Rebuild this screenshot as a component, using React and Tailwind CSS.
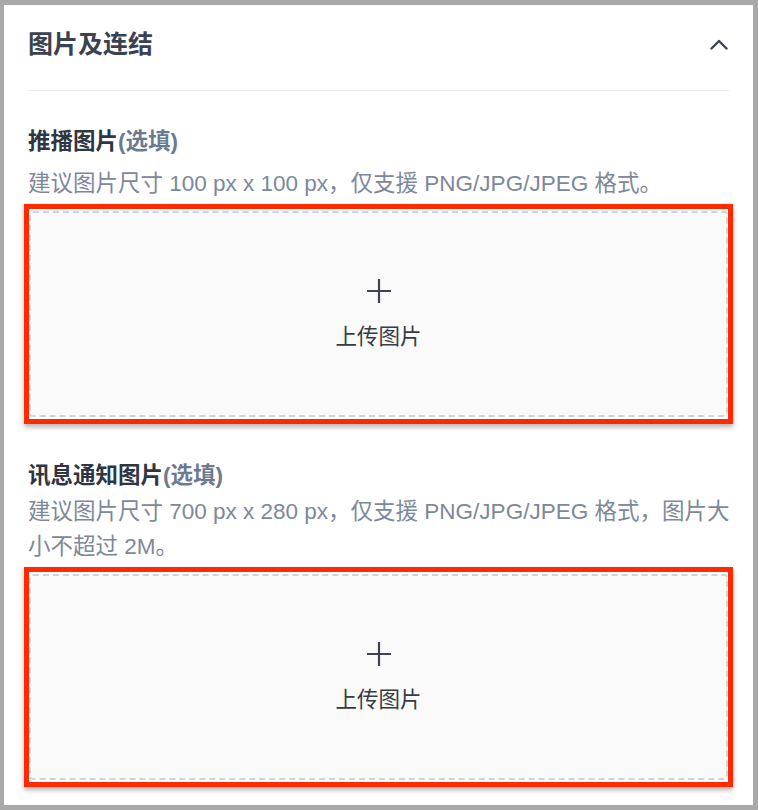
import React, { useState } from "react";

const FONT = {
  fontFamily: '"Liberation Sans", "Noto Sans CJK SC", sans-serif',
};

// Dashed upload area, wrapped in the red highlight frame
const UploadBox = ({ className = "" }) => {
  return (
    <div
      className={`-mx-[4px] border-[5px] border-[#ff2a00] p-[2px] px-0 shadow-[0_3px_5px_rgba(0,0,0,0.3)] ${className}`}
    >
      <button
        type="button"
        className="flex h-[206px] w-full flex-col items-center justify-center rounded-[4px] border-2 border-dashed border-[#cbd5df] bg-[#fafafa]"
      >
        <svg width="26" height="26" viewBox="0 0 26 26" className="mb-[19px]">
          <path
            d="M13 1v24M1 13h24"
            stroke="#3d4452"
            strokeWidth="2.2"
            fill="none"
          />
        </svg>
        <span className="text-[21.5px] leading-7 text-[#363b44]">上传图片</span>
      </button>
    </div>
  );
};

export default function App() {
  const [open, setOpen] = useState(true);

  return (
    <div
      className="min-h-[810px] w-[758px] bg-[#a9a9a9] pb-[5px] pl-[4px] pr-[5px] pt-[5px]"
      style={FONT}
    >
      <div className="bg-white px-[24px] pb-[18px] pt-[21px]">
        {/* Section header */}
        <div className="flex items-center justify-between border-b border-[#e8eaed] pb-[28px]">
          <h2 className="text-[25px] font-semibold leading-9 text-[#3a4250]">
            图片及连结
          </h2>
          <button
            type="button"
            onClick={() => setOpen(!open)}
            className="mr-[1px] flex h-9 items-center"
          >
            <svg width="18" height="11" viewBox="0 0 18 11">
              <path
                d={open ? "M1.5 9.5 9 2l7.5 7.5" : "M1.5 1.5 9 9l7.5-7.5"}
                stroke="#3a4453"
                strokeWidth="2.4"
                fill="none"
                strokeLinecap="round"
                strokeLinejoin="round"
              />
            </svg>
          </button>
        </div>

        {open && (
          <>
            {/* Push image */}
            <div className="mt-[35px]">
              <div className="text-[22.5px] font-semibold leading-8 text-[#2f3542]">
                推播图片<span className="text-[#6c7a8f]">(选填)</span>
              </div>
              <p className="-mr-2 mt-2 text-[22.5px] leading-[35px] text-[#7d889a]">
                建议图片尺寸 100 px x 100 px，仅支援 PNG/JPG/JPEG 格式。
              </p>
              <UploadBox className="mt-[3px]" />
            </div>

            {/* Notification image */}
            <div className="mt-[36px]">
              <div className="text-[22.5px] font-semibold leading-8 text-[#2f3542]">
                讯息通知图片<span className="text-[#6c7a8f]">(选填)</span>
              </div>
              <p className="-mr-2 mt-[2px] text-[22.5px] leading-[35px] text-[#7d889a]">
                建议图片尺寸 700 px x 280 px，仅支援 PNG/JPG/JPEG
                格式，图片大小不超过 2M。
              </p>
              <UploadBox className="mt-[3px]" />
            </div>
          </>
        )}
      </div>
    </div>
  );
}
